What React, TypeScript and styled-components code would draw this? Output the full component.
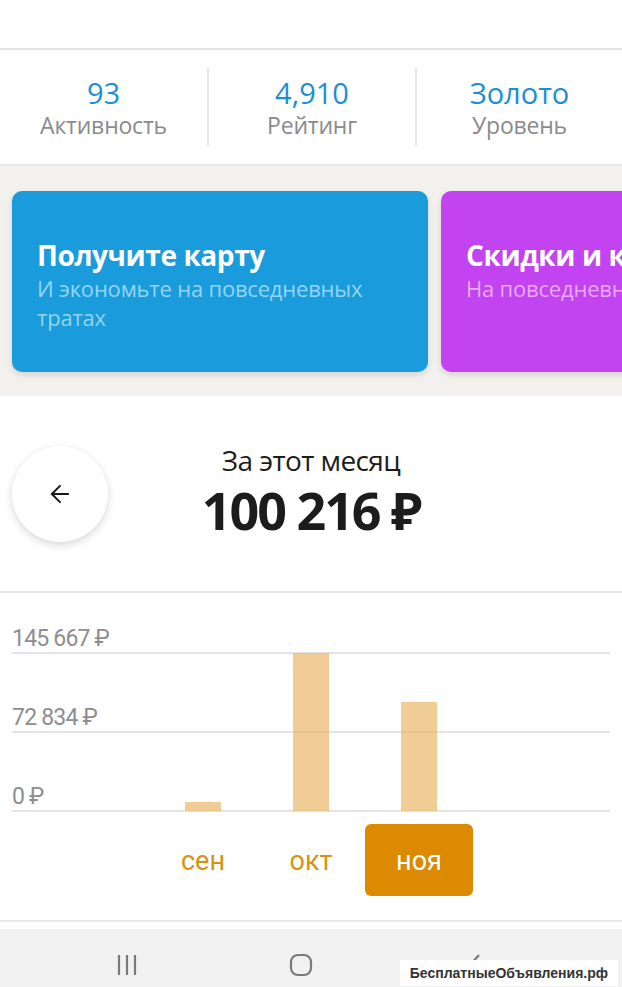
import styled, { createGlobalStyle } from "styled-components";
import { ArrowLeft } from "lucide-react";

const GlobalStyle = createGlobalStyle`
  html, body {
    margin: 0;
    padding: 0;
    background: #ffffff;
    font-family: "Open Sans", "Noto Sans", sans-serif;
  }
  * { box-sizing: border-box; }
`;

const stats = [
  { value: "93", label: "Активность" },
  { value: "4,910", label: "Рейтинг" },
  { value: "Золото", label: "Уровень" },
];

const gridRows = [
  { label: "145 667 ₽", height: 61 },
  { label: "72 834 ₽", height: 79 },
  { label: "0 ₽", height: 79 },
];

const months = [
  { name: "", amount: 0, active: false },
  { name: "сен", amount: 8300, active: false },
  { name: "окт", amount: 145667, active: false },
  { name: "ноя", amount: 100216, active: true },
  { name: "", amount: 0, active: false },
];

const MAX = 145667;

const App = () => {
  return (
    <Screen>
      <GlobalStyle />
      <TopBar />

      <StatsRow>
        {stats.map((s) => (
          <Stat key={s.label}>
            <StatValue>{s.value}</StatValue>
            <StatLabel>{s.label}</StatLabel>
          </Stat>
        ))}
      </StatsRow>

      <PromoStrip>
        <PromoCard $bg="#1a9bdb">
          <PromoTitle>Получите карту</PromoTitle>
          <PromoText $color="#93d5f6">И экономьте на повседневных тратах</PromoText>
        </PromoCard>
        <PromoCard $bg="#c243f0">
          <PromoTitle>Скидки и кешбэк</PromoTitle>
          <PromoText $color="#eaa8fa">На повседневные покупки</PromoText>
        </PromoCard>
      </PromoStrip>

      <Summary>
        <BackButton>
          <ArrowLeft size={28} strokeWidth={1.7} color="#1a1a1a" />
        </BackButton>
        <SummaryText>
          <SummaryTitle>За этот месяц</SummaryTitle>
          <SummaryAmount>100 216 ₽</SummaryAmount>
        </SummaryText>
      </Summary>

      <ChartSection>
        <ChartGrid>
          {gridRows.map((r) => (
            <GridRow key={r.label} $h={r.height}>
              <AxisLabel>{r.label}</AxisLabel>
            </GridRow>
          ))}
          <BarsLayer>
            {months.map((m, i) => (
              <BarSlot key={i}>
                {m.amount > 0 && (
                  <Bar style={{ height: `${(m.amount / MAX) * 158}px` }} />
                )}
              </BarSlot>
            ))}
          </BarsLayer>
        </ChartGrid>

        <MonthRow>
          {months.map((m, i) => (
            <MonthTab key={i} $active={m.active}>
              {m.name}
            </MonthTab>
          ))}
        </MonthRow>
      </ChartSection>

      <NavBar>
        <NavIcon>
          <svg width="26" height="24" viewBox="0 0 26 24">
            <path d="M5 2v20M13 2v20M21 2v20" stroke="#7a7a7a" strokeWidth="2.2" />
          </svg>
        </NavIcon>
        <NavIcon>
          <svg width="26" height="26" viewBox="0 0 26 26">
            <rect x="3" y="3" width="20" height="20" rx="7" fill="none" stroke="#7a7a7a" strokeWidth="2.2" />
          </svg>
        </NavIcon>
        <NavIcon>
          <svg width="20" height="26" viewBox="0 0 20 26">
            <path d="M14 3L5 13l9 10" fill="none" stroke="#7a7a7a" strokeWidth="2.2" />
          </svg>
        </NavIcon>
        <Watermark>БесплатныеОбъявления.рф</Watermark>
      </NavBar>
    </Screen>
  );
};

const Screen = styled.div`
  width: 622px;
  height: 987px;
  overflow: hidden;
  background: #ffffff;
  display: flex;
  flex-direction: column;
`;

const TopBar = styled.div`
  height: 50px;
  flex-shrink: 0;
  border-bottom: 2px solid #e2e2e2;
`;

const StatsRow = styled.div`
  height: 116px;
  flex-shrink: 0;
  display: grid;
  grid-template-columns: 207px 208px 207px;
  align-items: center;
  border-bottom: 2px solid #e7e6e3;
`;

const Stat = styled.div`
  height: 78px;
  display: flex;
  flex-direction: column;
  align-items: center;
  justify-content: center;
  padding-top: 4px;
  & + & {
    border-left: 2px solid #e4e4e4;
  }
`;

const StatValue = styled.div`
  font-size: 29px;
  line-height: 32px;
  color: #1c8fd1;
`;

const StatLabel = styled.div`
  font-size: 23px;
  line-height: 33px;
  color: #8b8b8b;
  letter-spacing: -0.2px;
`;

const PromoStrip = styled.div`
  height: 230px;
  flex-shrink: 0;
  background: #f2f1ee;
  display: flex;
  gap: 13px;
  padding: 25px 0 24px 12px;
  overflow: hidden;
`;

const PromoCard = styled.div<{ $bg: string }>`
  flex: 0 0 416px;
  height: 181px;
  border-radius: 10px;
  background: ${(p) => p.$bg};
  box-shadow: 0 3px 6px rgba(0, 0, 0, 0.12);
  padding: 45px 20px 0 25px;
  white-space: nowrap;
  overflow: hidden;
`;

const PromoTitle = styled.div`
  font-size: 28px;
  font-weight: 700;
  line-height: 38px;
  color: #ffffff;
  letter-spacing: -0.4px;
`;

const PromoText = styled.div<{ $color: string }>`
  font-size: 22px;
  line-height: 29px;
  color: ${(p) => p.$color};
  white-space: normal;
  width: 370px;
  letter-spacing: -0.2px;
`;

const Summary = styled.div`
  height: 197px;
  flex-shrink: 0;
  position: relative;
  display: flex;
  justify-content: center;
  padding-top: 45px;
  border-bottom: 2px solid #e6e6e6;
`;

const BackButton = styled.div`
  position: absolute;
  left: 12px;
  top: 50px;
  width: 96px;
  height: 96px;
  border-radius: 50%;
  background: #ffffff;
  box-shadow: 0 3px 9px rgba(0, 0, 0, 0.16);
  display: flex;
  align-items: center;
  justify-content: center;
`;

const SummaryText = styled.div`
  display: flex;
  flex-direction: column;
  align-items: center;
  gap: 2px;
`;

const SummaryTitle = styled.div`
  font-size: 28px;
  line-height: 38px;
  color: #1c1c1c;
  letter-spacing: -0.6px;
`;

const SummaryAmount = styled.div`
  font-size: 52px;
  font-weight: 700;
  line-height: 58px;
  color: #1c1c1c;
  letter-spacing: -2px;
`;

const ChartSection = styled.div`
  height: 329px;
  flex-shrink: 0;
  padding: 0 12px;
  border-bottom: 2px solid #e8e8e8;
`;

const ChartGrid = styled.div`
  position: relative;
`;

const GridRow = styled.div<{ $h: number }>`
  height: ${(p) => p.$h}px;
  display: flex;
  align-items: flex-end;
  border-bottom: 2px solid #e4e4e4;
`;

const AxisLabel = styled.div`
  font-family: Roboto, "Noto Sans", sans-serif;
  font-size: 23px;
  line-height: 26px;
  color: #8e8e8e;
  letter-spacing: -0.8px;
`;

const BarsLayer = styled.div`
  position: absolute;
  left: 0;
  right: 0;
  top: 60px;
  height: 158px;
  display: grid;
  grid-template-columns: repeat(5, 108px);
  justify-content: center;
  align-items: end;
  pointer-events: none;
`;

const BarSlot = styled.div`
  height: 100%;
  display: flex;
  justify-content: center;
  align-items: flex-end;
`;

const Bar = styled.div`
  width: 36px;
  background: rgba(233, 182, 98, 0.68);
`;

const MonthRow = styled.div`
  margin-top: 12px;
  display: grid;
  grid-template-columns: repeat(5, 108px);
  justify-content: center;
`;

const MonthTab = styled.div<{ $active: boolean }>`
  height: 72px;
  border-radius: 6px;
  display: flex;
  align-items: center;
  justify-content: center;
  padding-top: 2px;
  font-family: Roboto, "Noto Sans", sans-serif;
  font-size: 27px;
  color: ${(p) => (p.$active ? "#ffffff" : "#d8920f")};
  background: ${(p) => (p.$active ? "#dc8a00" : "transparent")};
`;

const NavBar = styled.div`
  position: relative;
  margin-top: 7px;
  flex: 1;
  background: #f1f1f1;
  display: grid;
  grid-template-columns: 40px 174px 174px 174px 60px;
  align-items: center;
`;

const NavIcon = styled.div`
  display: flex;
  justify-content: center;
  align-items: center;
  padding-top: 14px;
  &:first-child {
    grid-column: 2;
  }
`;

const Watermark = styled.div`
  position: absolute;
  right: 4px;
  bottom: 1px;
  background: #ffffff;
  padding: 5px 10px 5px 10px;
  font-family: "Liberation Sans", Arial, sans-serif;
  font-weight: 700;
  font-size: 14px;
  color: #333333;
`;

export default App;
